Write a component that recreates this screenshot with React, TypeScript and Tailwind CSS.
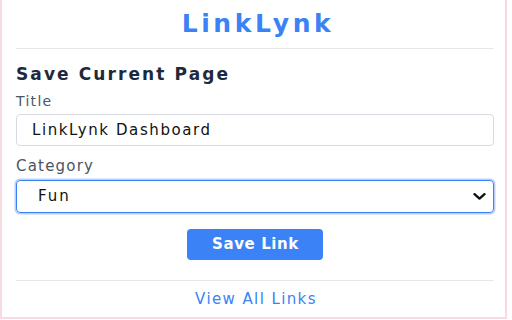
import React from "react";

export default function App() {
  return (
    <div
      className="w-[507px] h-[319px] bg-white border-l-2 border-r-2 border-b-2 border-[#f6dce0] pl-[14px] pr-[11px] flex flex-col"
      style={{ fontFamily: '"DejaVu Sans", Verdana, sans-serif' }}
    >
      <h1 className="h-[49px] flex items-center justify-center pl-[6px] border-b border-[#e5e7eb] text-[25px] font-bold tracking-[3.6px] text-[#3b82f6]">
        LinkLynk
      </h1>
      <h2 className="mt-[15px] leading-[20px] text-[17px] font-bold tracking-[2.1px] text-[#1e293b]">
        Save Current Page
      </h2>
      <label className="mt-[7px] leading-[20px] text-[14px] tracking-[1.3px] text-[#4b5563]">
        Title
      </label>
      <input
        readOnly
        defaultValue="LinkLynk Dashboard"
        className="mt-[3px] h-[32px] w-full rounded-[4px] border border-[#d7dbe1] px-[15px] text-[15px] tracking-[1.6px] text-[#111111] outline-none"
        style={{ fontFamily: '"DejaVu Sans", Verdana, sans-serif' }}
      />
      <label className="mt-[10px] leading-[20px] text-[15px] tracking-[1.2px] text-[#4b5563]">
        Category
      </label>
      <div className="mt-[4px] h-[33px] w-full rounded-[4px] border border-[#3b82f6] shadow-[0_0_0_1.5px_rgba(96,150,246,0.45)] flex items-center justify-between pl-[21px] pr-[7px]">
        <span className="text-[15px] tracking-[2px] text-[#111111]">Fun</span>
        <svg width="13" height="7" viewBox="0 0 13 7" fill="none">
          <path d="M1.5 1.2 L6.5 5.6 L11.5 1.2" stroke="#111" strokeWidth="2.4" strokeLinecap="round" strokeLinejoin="round" />
        </svg>
      </div>
      <div className="mt-[16px] flex justify-center">
        <button className="w-[136px] h-[31px] rounded-[4px] bg-[#3b82f6] text-white text-[15px] font-semibold tracking-[0.6px] flex items-center justify-center pl-[1px]">
          Save Link
        </button>
      </div>
      <div className="mt-[20px] border-t border-[#e5e7eb]" />
      <div className="mt-[8px] leading-[20px] text-center text-[15px] tracking-[1.4px] text-[#3b82f6] pl-[2px]">
        View All Links
      </div>
    </div>
  );
}
